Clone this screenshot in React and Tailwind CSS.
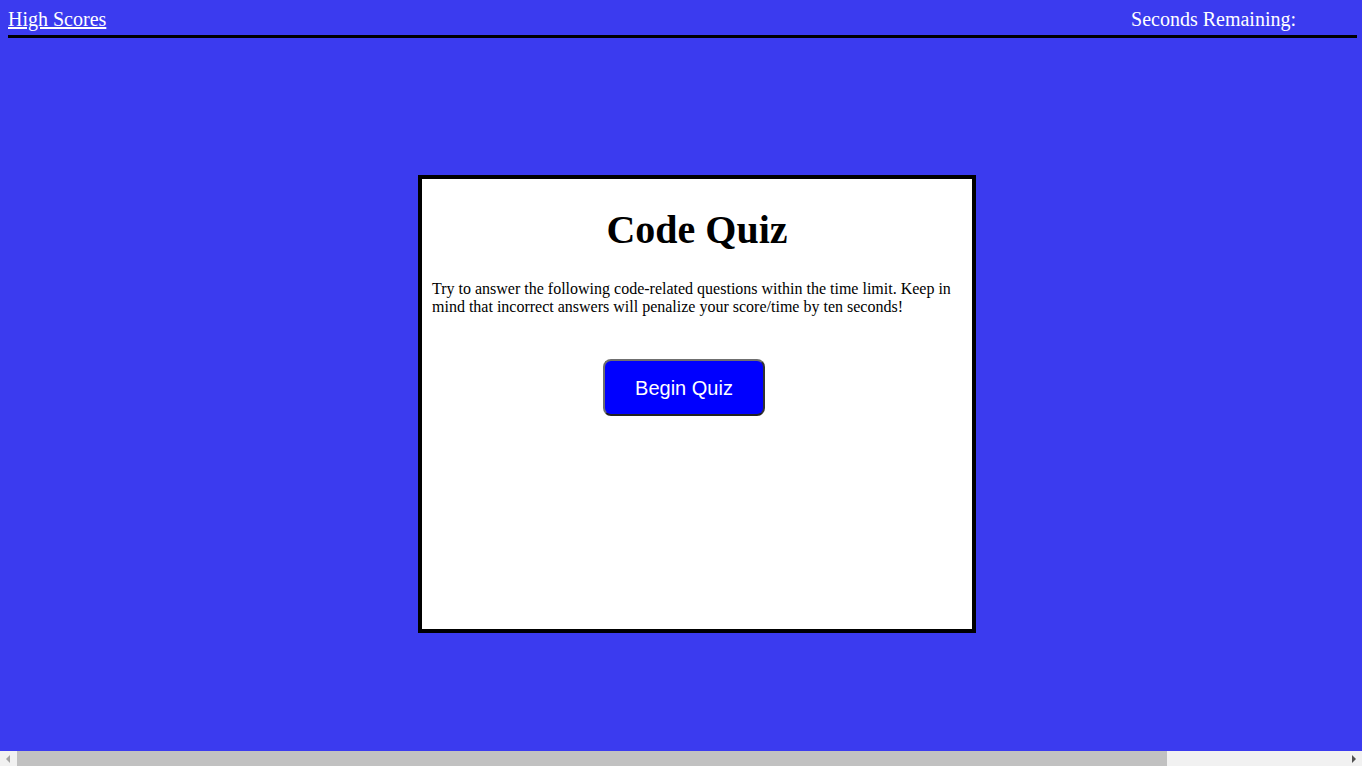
export default function App() {
  return (
    <div
      className="w-full h-[766px] bg-[#3b3bef] flex flex-col"
      style={{ fontFamily: '"Liberation Serif", "Times New Roman", serif' }}
    >
      <div className="flex-1 pt-[8px]">
        {/* Header */}
        <header className="ml-[8px] w-[1349px] flex items-start justify-between border-b-[3px] border-black pb-[4px] text-[20px] leading-[23px] text-white">
          <a href="#" className="underline">High Scores</a>
          <div className="pr-[61px]">
            Seconds Remaining: <span></span>
          </div>
        </header>

        {/* Card */}
        <main className="ml-[418px] mt-[137px] w-[558px] h-[458px] border-4 border-black bg-white pt-[28px] px-[10px] text-black">
          <h1 className="text-center text-[40px] leading-[46px] font-bold">Code Quiz</h1>
          <p className="mt-[27px] text-[16px] leading-[18px]">
            Try to answer the following code-related questions within the time limit. Keep in mind that incorrect answers will penalize your score/time by ten seconds!
          </p>
          <button
            className="mt-[43px] ml-[171px] w-[162px] h-[57px] rounded-[8px] bg-[#0000ff] border-2 border-t-[#6f6f6f] border-l-[#6f6f6f] border-r-[#333] border-b-[#222] text-white text-[20px]"
            style={{ fontFamily: '"Liberation Sans", Arial, sans-serif' }}
          >
            Begin Quiz
          </button>
        </main>
      </div>

      {/* Horizontal scrollbar */}
      <div className="h-[15px] mt-[1px] bg-[#f1f1f1] flex items-center">
        <div className="w-[17px] h-full flex items-center justify-center">
          <svg width="5" height="8" viewBox="0 0 5 8"><path d="M4 0 L0 4 L4 8 Z" fill="#a3a3a3" /></svg>
        </div>
        <div className="w-[1150px] h-full bg-[#c1c1c1]"></div>
        <div className="flex-1"></div>
        <div className="w-[17px] h-full flex items-center justify-center">
          <svg width="5" height="8" viewBox="0 0 5 8"><path d="M1 0 L5 4 L1 8 Z" fill="#505050" /></svg>
        </div>
      </div>
    </div>
  );
}
